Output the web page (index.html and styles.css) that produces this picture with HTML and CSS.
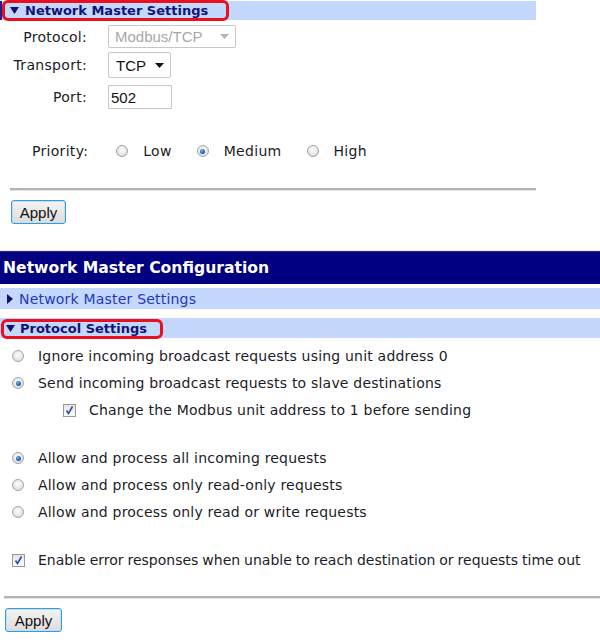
FILE: index.html
```html
<!DOCTYPE html>
<html>
<head>
<meta charset="utf-8">
<link rel="stylesheet" href="styles.css">
</head>
<body>
<section class="top">
  <div class="bar bar-top">
    <span class="title-bold annotated"><svg class="tri" width="9" height="7" viewBox="0 0 9 7"><path d="M0 0H9L4.5 7Z" fill="#10106e"/></svg>Network Master Settings</span>
  </div>
  <div class="form">
    <div class="frow r1">
      <label class="lbl">Protocol:</label>
      <div class="select disabled sel-proto"><span>Modbus/TCP</span><svg width="9" height="5" viewBox="0 0 9 5"><path d="M0 0H9L4.5 5Z" fill="#b4b4b4"/></svg></div>
    </div>
    <div class="frow r2">
      <label class="lbl">Transport:</label>
      <div class="select sel-trans"><span>TCP</span><svg width="9" height="5" viewBox="0 0 9 5"><path d="M0 0H9L4.5 5Z" fill="#111"/></svg></div>
    </div>
    <div class="frow r3">
      <label class="lbl">Port:</label>
      <input class="port" type="text" value="502">
    </div>
  </div>
  <div class="priority">
    <span class="prio-lbl">Priority:</span>
    <span class="radio"></span><span class="opt">Low</span>
    <span class="radio checked"></span><span class="opt">Medium</span>
    <span class="radio"></span><span class="opt">High</span>
  </div>
  <hr class="rule rule-top">
  <button class="btn btn-top">Apply</button>
</section>

<div class="thin"></div>
<div class="navy">Network Master Configuration</div>
<div class="bar bar-sub"><svg class="tri-r" width="6" height="10" viewBox="0 0 6 10"><path d="M0 0V10L6 5Z" fill="#10106e"/></svg><span class="link">Network Master Settings</span></div>
<div class="bar bar-proto"><span class="title-bold annotated2"><svg class="tri" width="9" height="7" viewBox="0 0 9 7"><path d="M0 0H9L4.5 7Z" fill="#10106e"/></svg>Protocol Settings</span></div>

<div class="opts">
  <div class="row"><span class="radio"></span><span>Ignore incoming broadcast requests using unit address 0</span></div>
  <div class="row"><span class="radio checked"></span><span>Send incoming broadcast requests to slave destinations</span></div>
  <div class="row sub"><span class="check"><svg width="11" height="11" viewBox="0 0 11 11"><path d="M2.5 5.5L4.5 8.5L8.5 1.5" fill="none" stroke="#3050a8" stroke-width="1.6"/></svg></span><span>Change the Modbus unit address to 1 before sending</span></div>
  <div class="row gap"><span class="radio checked"></span><span>Allow and process all incoming requests</span></div>
  <div class="row"><span class="radio"></span><span>Allow and process only read-only requests</span></div>
  <div class="row"><span class="radio"></span><span>Allow and process only read or write requests</span></div>
  <div class="row gap"><span class="check"><svg width="11" height="11" viewBox="0 0 11 11"><path d="M2.5 5.5L4.5 8.5L8.5 1.5" fill="none" stroke="#3050a8" stroke-width="1.6"/></svg></span><span class="tight">Enable error responses when unable to reach destination or requests time out</span></div>
</div>
<hr class="rule rule-bottom">
<button class="btn btn-bottom">Apply</button>
</body>
</html>
```

FILE: styles.css
```css
html, body {
  margin: 0;
  padding: 0;
  background: #fff;
}
body {
  font-family: "DejaVu Sans", Verdana, sans-serif;
  font-size: 13px;
  color: #1c1c28;
  width: 600px;
  height: 643px;
  overflow: hidden;
}
.top {
  width: 536px;
  height: 249px;
}
.bar {
  background: #c4d7fc;
  display: flex;
  align-items: center;
}
.bar-top {
  margin-top: 1px;
  height: 19px;
  border-left: 2px solid #20208a;
}
.title-bold {
  font-weight: bold;
  color: #12127a;
  font-size: 13px;
  display: inline-flex;
  align-items: center;
  position: relative;
}
.tri {
  margin-right: 6px;
}
.annotated {
  margin-left: 8px;
}
.annotated::after {
  content: "";
  position: absolute;
  left: -8px;
  right: -21px;
  top: -3px;
  bottom: -3px;
  border: 3px solid #e8101c;
  border-radius: 6px;
}
.form {
  display: flex;
  flex-direction: column;
}
.frow {
  display: flex;
  align-items: center;
}
.r1 { margin-top: 5px; height: 23px; }
.r2 { margin-top: 4px; height: 26px; }
.r3 { margin-top: 7px; height: 24px; }
.lbl {
  width: 87px;
  margin-right: 21px;
  text-align: right;
  font-size: 14px;
  letter-spacing: 0.3px;
}
.select {
  display: flex;
  align-items: center;
  justify-content: space-between;
  border: 1px solid #c8c8c8;
  border-radius: 2px;
  font-family: "Liberation Sans", Arial, sans-serif;
  font-size: 15px;
  box-sizing: border-box;
  padding: 0 6px 0 6px;
  background: #fff;
  height: 100%;
}
.sel-proto {
  width: 128px;
  color: #a8a8a8;
}
.sel-trans {
  width: 63px;
  color: #111;
  padding-left: 7px;
}
.port {
  display: block;
  width: 64px;
  height: 24px;
  box-sizing: border-box;
  border: 1px solid #c8c8c8;
  border-radius: 1px;
  font-family: "Liberation Sans", Arial, sans-serif;
  font-size: 15px;
  padding: 0 0 0 2px;
  color: #111;
  margin: 0;
}
.priority {
  display: flex;
  align-items: center;
  height: 16px;
  margin-top: 34px;
  padding-left: 32px;
  font-size: 14px;
  letter-spacing: 0.3px;
}
.prio-lbl { margin-right: 28px; }
.priority .radio { margin-right: 15px; }
.priority .opt { margin-right: 25px; }
.radio {
  flex: none;
  display: inline-block;
  width: 12px;
  height: 12px;
  box-sizing: border-box;
  border-radius: 50%;
  border: 1px solid #a4a4a4;
  background: radial-gradient(circle at 50% 40%, #fdfdfd 0%, #e6e6e6 60%, #cfcfcf 100%);
  position: relative;
}
.radio.checked::after {
  content: "";
  position: absolute;
  left: 2.5px;
  top: 2.5px;
  width: 5px;
  height: 5px;
  border-radius: 50%;
  background: radial-gradient(circle at 40% 35%, #6fb3f0 0%, #1a5fb4 60%, #0c3a80 100%);
}
.rule {
  border: none;
  height: 2px;
  background: #b4b4b4;
  border-bottom: 1px solid #e2e2e2;
  margin: 0;
}
.rule-top {
  margin: 29px 0 0 10px;
  width: 526px;
}
.btn {
  display: block;
  font-family: "Liberation Sans", Arial, sans-serif;
  font-size: 15px;
  color: #111;
  border: 1px solid #3a9ad8;
  border-radius: 3px;
  background: linear-gradient(#f4f4f4, #dcdcdc);
  box-shadow: inset 0 0 0 1px #bfe0f6;
  padding: 0;
  margin: 0;
}
.btn-top {
  width: 55px;
  height: 24px;
  margin: 9px 0 0 11px;
}
.thin {
  height: 1px;
  background: #e4e4f4;
}
.navy {
  background: #000080;
  color: #fff;
  font-weight: bold;
  font-size: 15.6px;
  line-height: 33px;
  padding-left: 3px;
  border-top: 1px solid #2a2a96;
  box-sizing: border-box;
  height: 33px;
}
.bar-sub {
  margin-top: 4px;
  height: 21px;
  padding-left: 7px;
}
.tri-r { margin-right: 6px; }
.link {
  color: #2436c0;
  font-size: 14px;
  letter-spacing: 0.2px;
}
.bar-proto {
  margin-top: 9px;
  height: 20px;
}
.annotated2 {
  margin-left: 6px;
}
.annotated2 .tri { margin-right: 5px; }
.annotated2::after {
  content: "";
  position: absolute;
  left: -5px;
  right: -16px;
  top: -2px;
  bottom: -3px;
  border: 3px solid #e8101c;
  border-radius: 6px;
}
.opts {
  margin-top: 9px;
  padding-left: 12px;
  font-size: 14px;
  letter-spacing: 0.2px;
}
.row {
  display: flex;
  align-items: center;
  height: 18px;
  margin-bottom: 9px;
}
.row .radio { margin-right: 14px; }
.row.sub { padding-left: 51px; }
.row.gap { margin-top: 30px; }
.check {
  flex: none;
  display: inline-flex;
  align-items: center;
  justify-content: center;
  width: 13px;
  height: 13px;
  box-sizing: border-box;
  border: 1px solid #9a9a9a;
  background: linear-gradient(#e4e4e4, #fbfbfb);
  margin-right: 13px;
}
.tight {
  letter-spacing: 0;
  word-spacing: -0.5px;
}
.rule-bottom {
  margin: 27px 0 0 4px;
  width: 596px;
}
.btn-bottom {
  width: 57px;
  height: 24px;
  margin: 9px 0 0 5px;
}
```
